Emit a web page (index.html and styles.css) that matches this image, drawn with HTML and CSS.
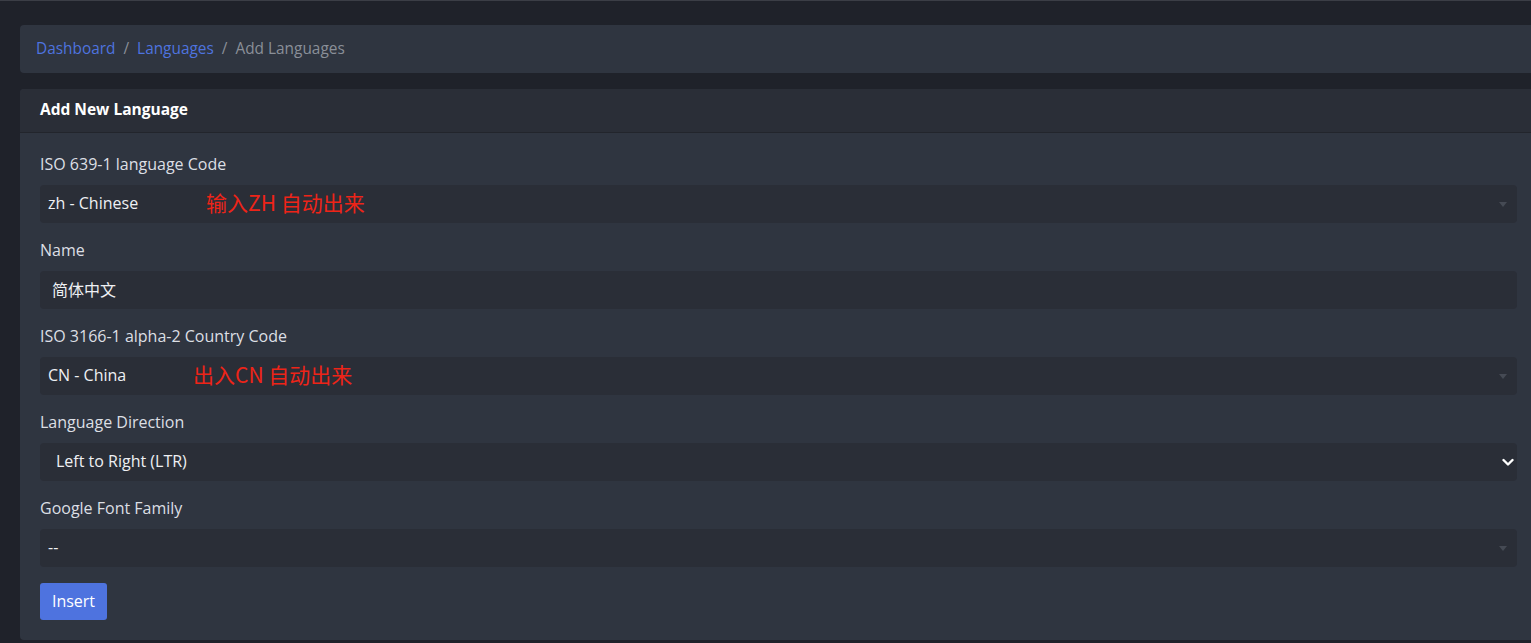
FILE: index.html
```html
<!DOCTYPE html>
<html lang="en">
<head>
<meta charset="utf-8">
<title>Add Languages</title>
<link rel="stylesheet" href="styles.css">
</head>
<body>
<div class="topline"></div>
<main class="content">
  <nav class="breadcrumb">
    <a class="crumb-link" href="#">Dashboard</a>
    <span class="sep">/</span>
    <a class="crumb-link" href="#">Languages</a>
    <span class="sep">/</span>
    <span class="crumb-active">Add Languages</span>
  </nav>

  <section class="card">
    <header class="card-header">Add New Language</header>
    <div class="card-body">
      <div class="group">
        <label class="label">ISO 639-1 language Code</label>
        <div class="field select2">
          <span class="value">zh - Chinese</span>
          <span class="note note-zh">输入ZH 自动出来</span>
          <span class="caret"></span>
        </div>
      </div>
      <div class="group">
        <label class="label">Name</label>
        <div class="field text"><span class="value">简体中文</span></div>
      </div>
      <div class="group">
        <label class="label">ISO 3166-1 alpha-2 Country Code</label>
        <div class="field select2">
          <span class="value">CN - China</span>
          <span class="note note-cn">出入CN 自动出来</span>
          <span class="caret"></span>
        </div>
      </div>
      <div class="group">
        <label class="label">Language Direction</label>
        <div class="field native">
          <span class="value">Left to Right (LTR)</span>
          <svg class="chev" width="12" height="9" viewBox="0 0 12 9"><path d="M1.5 2 L6 6.5 L10.5 2" fill="none" stroke="#ffffff" stroke-width="2.4" stroke-linecap="round" stroke-linejoin="round"/></svg>
        </div>
      </div>
      <div class="group">
        <label class="label">Google Font Family</label>
        <div class="field select2">
          <span class="value">--</span>
          <span class="caret"></span>
        </div>
      </div>
      <button class="btn" type="button">Insert</button>
    </div>
  </section>
</main>
</body>
</html>
```

FILE: styles.css
```css
* { box-sizing: border-box; }
html, body { margin: 0; padding: 0; }
body {
  background: #1f222a;
  font-family: "Open Sans", "Noto Sans", sans-serif;
  font-size: 16px;
  color: #dcdfe4;
  height: 643px;
  overflow: hidden;
}
.topline { height: 1px; background: #3b3e46; }
.content { padding: 24px 0 0 20px; }

.breadcrumb {
  background: #2f3540;
  height: 48px;
  border-radius: 4px 0 0 4px;
  display: flex;
  align-items: center;
  padding: 0 16px 2px;
  gap: 8px;
  font-size: 15.4px;
}
.crumb-link { color: #4e73df; text-decoration: none; }
.sep { color: #8a8f98; }
.crumb-active { color: #8a8f98; }

.card {
  margin-top: 16px;
  background: #2f3540;
  border-radius: 4px 0 0 4px;
  overflow: hidden;
}
.card-header {
  height: 44px;
  background: #2a2e37;
  border-bottom: 1px solid #22252c;
  display: flex;
  align-items: center;
  padding: 0 20px 3px;
  font-weight: 700;
  color: #ffffff;
  font-size: 15.5px;
}
.card-body { padding: 20px 14px 20px 20px; }

.group { margin-bottom: 16px; }
.label { display: block; height: 22px; line-height: 22px; margin-bottom: 10px; color: #dcdfe4; }

.field {
  position: relative;
  height: 38px;
  background: #2a2e37;
  border-radius: 4px;
  display: flex;
  align-items: center;
  padding-bottom: 2px;
  color: #eef0f3;
}
.field .value { line-height: 20px; }
.select2 { padding-left: 8px; }
.text { padding-left: 12px; font-family: "Noto Sans CJK SC", sans-serif; }
.native { padding-left: 16px; }

.caret {
  position: absolute;
  right: 10px;
  top: 17px;
  width: 0; height: 0;
  border-left: 4px solid transparent;
  border-right: 4px solid transparent;
  border-top: 5px solid #454a54;
}
.chev { position: absolute; right: 3px; top: 15px; }

.note {
  position: absolute;
  top: 3px;
  font-family: "Noto Sans CJK SC", sans-serif;
  font-size: 21px;
  line-height: 28px;
  color: #ee2418;
  white-space: nowrap;
}
.note-zh { left: 166px; }
.note-cn { left: 153px; }

.btn {
  display: block;
  width: 67px;
  height: 37px;
  border: none;
  border-radius: 3px;
  background: #4e73df;
  color: #ffffff;
  font-family: "Open Sans", "Noto Sans", sans-serif;
  font-size: 16px;
  padding: 0 0 2px;
}
```
